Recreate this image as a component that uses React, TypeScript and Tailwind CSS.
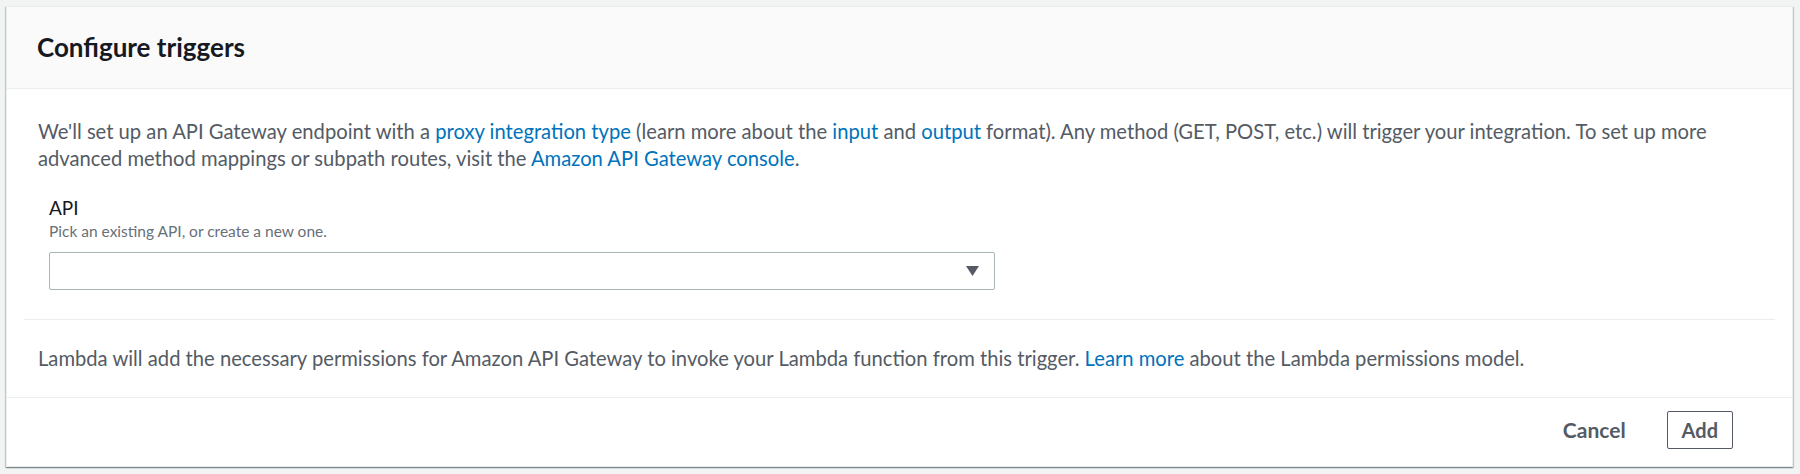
function Link({ children }: { children: React.ReactNode }) {
  return <a className="text-[#0073bb] cursor-pointer">{children}</a>
}

export default function App() {
  return (
    <div className="min-h-[474px] w-[1800px] bg-[#f2f3f3] p-[6px] pr-[7px] font-['Lato',sans-serif]">
      <div className="flex flex-col bg-white border border-[#eaeded] shadow-[0_1px_1px_0_rgba(0,28,36,0.3),1px_1px_1px_0_rgba(0,28,36,0.15),-1px_1px_1px_0_rgba(0,28,36,0.15)]">
        <div className="flex h-[82px] items-center border-b border-[#eaeded] bg-[#fafafa] pl-[30px]">
          <h2 className="text-[26px] font-bold text-[#16191f]">Configure triggers</h2>
        </div>

        <div className="px-[17px]">
          <div className="border-b border-[#eaeded] px-[14px] pt-[29px] pb-[29px]">
            <p className="text-[20.2px] leading-[27px] text-[#545b64]">
              We'll set up an API Gateway endpoint with a <Link>proxy integration type</Link> (learn more
              about the <Link>input</Link> and <Link>output</Link> format). Any method (GET, POST, etc.)
              will trigger your integration. To set up more advanced method mappings or subpath routes,
              visit the <Link>Amazon API Gateway console</Link>.
            </p>
            <div className="mt-[24px] w-[957px] pl-[11px]">
              <div className="text-[19px] leading-[24px] text-[#16191f]">API</div>
              <div className="text-[15.5px] leading-[22px] text-[#687078]">
                Pick an existing API, or create a new one.
              </div>
              <div className="mt-[10px] flex h-[38px] items-center justify-end rounded-[2px] border border-[#aab7b8] bg-white pr-[15px]">
                <svg width="13" height="10" viewBox="0 0 13 10">
                  <path d="M0 0h13L6.5 10z" fill="#545b64" />
                </svg>
              </div>
            </div>
          </div>
          <p className="px-[14px] pt-[25px] pb-[25px] text-[20.2px] leading-[27px] text-[#545b64]">
            Lambda will add the necessary permissions for Amazon API Gateway to invoke your Lambda function
            from this trigger. <Link>Learn more</Link> about the Lambda permissions model.
          </p>
        </div>

        <div className="flex items-center justify-end gap-[41px] border-t border-[#eaeded] px-[59px] pt-[13px] pb-[17px]">
          <button className="text-[21px] font-bold text-[#545b64]">Cancel</button>
          <button className="h-[38px] rounded-[2px] border border-[#545b64] px-[14px] text-[20px] font-bold text-[#545b64]">
            Add
          </button>
        </div>
      </div>
    </div>
  )
}
